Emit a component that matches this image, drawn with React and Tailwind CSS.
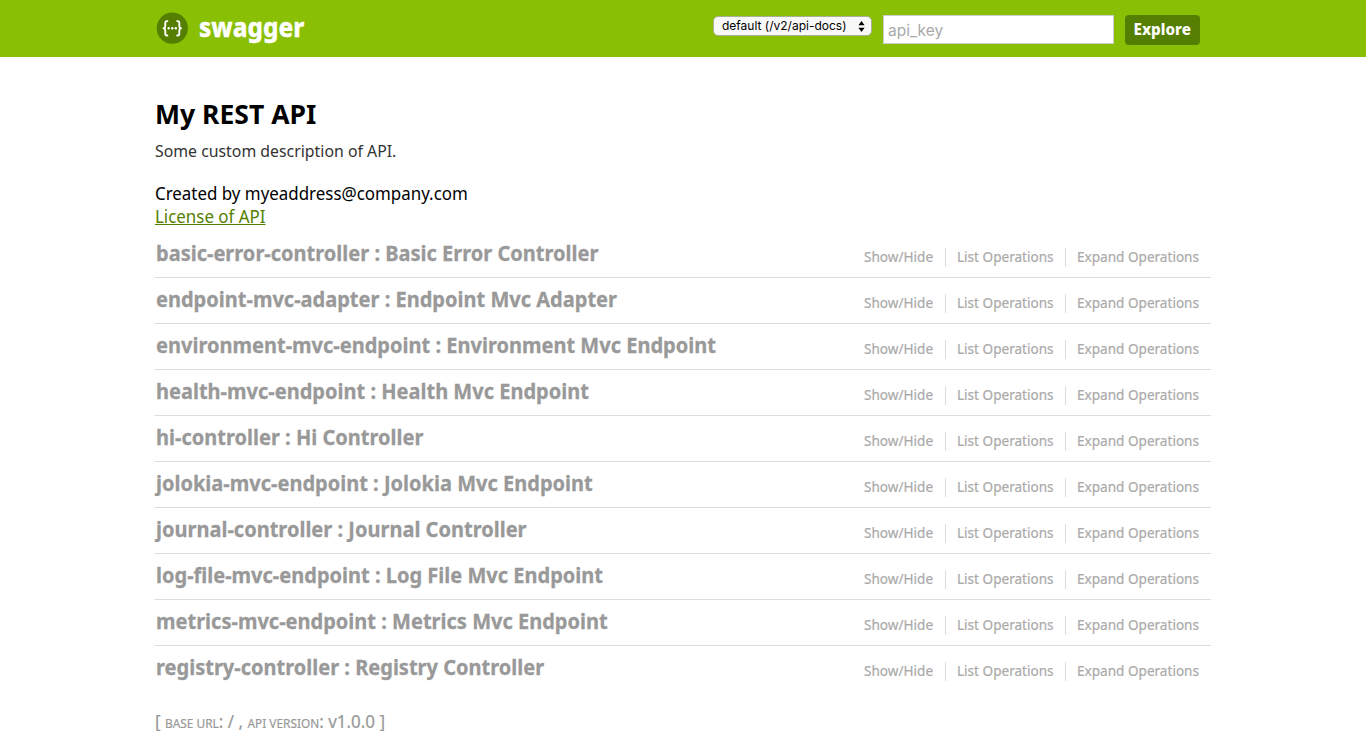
const controllers = [
  ["basic-error-controller", "Basic Error Controller"],
  ["endpoint-mvc-adapter", "Endpoint Mvc Adapter"],
  ["environment-mvc-endpoint", "Environment Mvc Endpoint"],
  ["health-mvc-endpoint", "Health Mvc Endpoint"],
  ["hi-controller", "Hi Controller"],
  ["jolokia-mvc-endpoint", "Jolokia Mvc Endpoint"],
  ["journal-controller", "Journal Controller"],
  ["log-file-mvc-endpoint", "Log File Mvc Endpoint"],
  ["metrics-mvc-endpoint", "Metrics Mvc Endpoint"],
  ["registry-controller", "Registry Controller"],
];

function Logo() {
  return (
    <svg className="h-8 w-8 shrink-0" viewBox="0 0 32 32" fill="none">
      <circle cx="16.3" cy="16.2" r="15.6" fill="#547f00" />
      <g stroke="#fff" strokeWidth="1.9" strokeLinecap="round" strokeLinejoin="round">
        <path d="M11.4 9.1H10.9Q9.3 9.1 9.3 10.9V13.9Q9.3 16 7.6 16.3Q9.3 16.6 9.3 18.7V21.7Q9.3 23.5 10.9 23.5H11.4" />
        <path d="M21.2 9.1H21.7Q23.3 9.1 23.3 10.9V13.9Q23.3 16 25 16.3Q23.3 16.6 23.3 18.7V21.7Q23.3 23.5 21.7 23.5H21.2" />
      </g>
      <g fill="#fff">
        <circle cx="12.7" cy="16.3" r="1.2" />
        <circle cx="16.3" cy="16.3" r="1.2" />
        <circle cx="19.9" cy="16.3" r="1.2" />
      </g>
    </svg>
  );
}

function Header() {
  return (
    <header className="h-[57px] bg-[#89bf04]">
      <div className="mx-auto flex w-[1056px] items-start pl-px pr-[11px]">
        <a className="flex flex-1 pt-3 text-white">
          <Logo />
          <span className="ml-[11px] mt-[-1px] inline-block origin-left scale-x-[.92] text-[26.4px] font-extrabold leading-8 [-webkit-text-stroke:0.3px_#fff]">
            swagger
          </span>
        </a>
        <div className="mt-4 flex h-5 w-[159px] items-center justify-between rounded-[5px] border border-[#a9b096] bg-[#f8f8f8] pl-2 pr-[6px] font-['Inter',sans-serif] text-[12px] leading-[18px] text-black">
          <span className="whitespace-nowrap">default (/v2/api-docs)</span>
          <svg className="h-[11px] w-[7px]" viewBox="0 0 7 11">
            <path d="M3.5 0L6.6 4.3H.4zM3.5 11L.4 6.7H6.6z" fill="#000" />
          </svg>
        </div>
        <input
          className="ml-[11px] mt-[15px] h-[29px] w-[231px] border border-[#ccc] bg-white px-1 pt-0.5 font-['Inter',sans-serif] text-[15.5px] outline-none placeholder:text-[#a9a9a9]"
          placeholder="api_key"
        />
        <button className="ml-[11px] mt-[15px] flex h-[30px] w-[75px] items-center justify-center rounded bg-[#547f00] pb-0.5 text-[16px] font-extrabold text-white">
          <span className="inline-block scale-x-[.95]">Explore</span>
        </button>
      </div>
    </header>
  );
}

function ControllerRow({ name, title, last }) {
  return (
    <li className={last ? "flex h-[46px] justify-between" : "flex h-[46px] justify-between border-b border-[#ddd]"}>
      <h2 className="ml-px origin-left scale-x-[.91] whitespace-nowrap pt-[5px] text-[22px] font-bold leading-[30px] text-[#999] [-webkit-text-stroke:0.3px_#999]">
        {name} : {title}
      </h2>
      <ul className="mr-px mt-[16px] flex h-[19px] text-[14.4px] leading-[17px] text-[#aaa]">
        <li className="w-[93px] border-r border-[#ddd] pl-[11px]">
          <span className="inline-block origin-left scale-x-[.943] whitespace-nowrap [-webkit-text-stroke:0.2px_#aaa]">Show/Hide</span>
        </li>
        <li className="w-[120px] border-r border-[#ddd] pl-[11px]">
          <span className="inline-block origin-left scale-x-[.943] whitespace-nowrap [-webkit-text-stroke:0.2px_#aaa]">List Operations</span>
        </li>
        <li className="w-[144px] pl-[11px]">
          <span className="inline-block origin-left scale-x-[.943] whitespace-nowrap [-webkit-text-stroke:0.2px_#aaa]">Expand Operations</span>
        </li>
      </ul>
    </li>
  );
}

export default function App() {
  return (
    <div className="h-[731px] overflow-hidden bg-white font-['Noto_Sans','Open_Sans',sans-serif]">
      <Header />
      <main className="mx-auto w-[1056px] whitespace-nowrap">
        <h1 className="mt-[38px] origin-left scale-x-[.965] text-[27.5px] font-bold leading-[38px] text-black">
          My REST API
        </h1>
        <p className="mt-[7px] origin-left scale-x-[.99] text-[16px] leading-[22px] text-[#333]">
          Some custom description of API.
        </p>
        <p className="mt-[20px] origin-left scale-x-[.961] text-[17.6px] leading-[23px] text-black">
          Created by myeaddress@company.com
        </p>
        <p className="origin-left scale-x-[.961] text-[17.6px] leading-[23px]">
          <a className="text-[#547f00] underline">License of API</a>
        </p>
        <ul className="mt-[4px]">
          {controllers.map(([name, title], i) => (
            <ControllerRow key={name} name={name} title={title} last={i === controllers.length - 1} />
          ))}
        </ul>
        <p className="mt-[19px] origin-left scale-x-[.965] text-[17.6px] leading-[20px] text-[#999] [-webkit-text-stroke:0.2px_#999]">
          [ <span className="text-[12.3px] uppercase">base url</span>: / ,{" "}
          <span className="text-[12.3px] uppercase">api version</span>: v1.0.0 ]
        </p>
      </main>
    </div>
  );
}
